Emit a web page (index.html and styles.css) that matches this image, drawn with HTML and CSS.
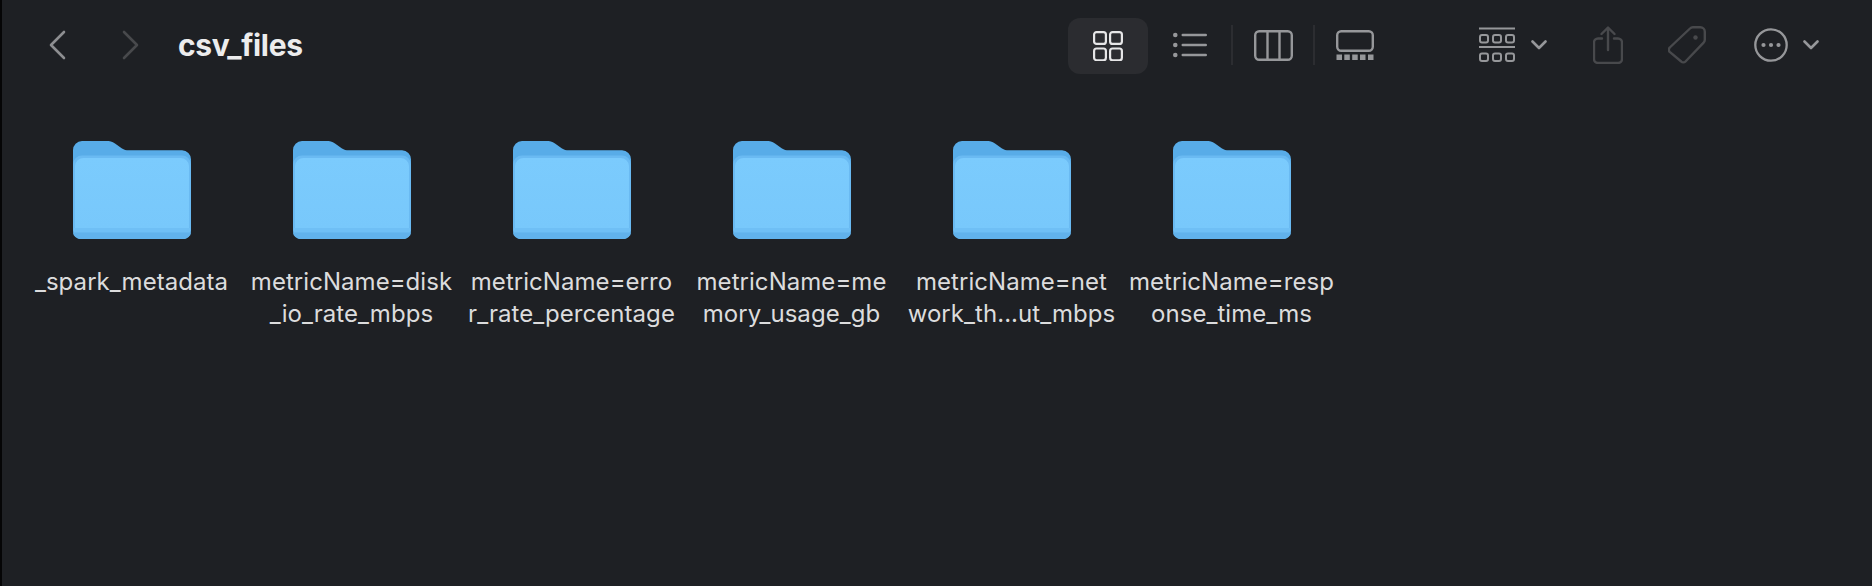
FILE: index.html
```html
<!DOCTYPE html>
<html lang="en">
<head>
<meta charset="UTF-8" />
<title>csv_files</title>
<link rel="stylesheet" href="styles.css">
</head>
<body>

<svg class="defs" width="0" height="0">
    <defs>
        <linearGradient id="front" x1="0" y1="0" x2="0" y2="1">
            <stop offset="0" stop-color="#7bcbfd"/>
            <stop offset="1" stop-color="#78c8fb"/>
        </linearGradient>
        <symbol id="folder" viewBox="0 0 118 98">
            <path d="M0 9a9 9 0 0 1 9-9h24c4 0 6 .6 9 2.600l7 4.800c2 1.300 4 1.900 7 1.900h53a9 9 0 0 1 9 9v71a9 9 0 0 1-9 9H9a9 9 0 0 1-9-9z" fill="#58ace8"/>
            <path d="M0 23a9 9 0 0 1 9-8.500h100a9 9 0 0 1 9 8.500v66a9 9 0 0 1-9 9H9a9 9 0 0 1-9-9z" fill="#6abaf2"/>
            <path d="M2 25a8.500 8.500 0 0 1 8.500-8h97a8.500 8.500 0 0 1 8.500 8v63H2z" fill="url(#front)"/>
            <path d="M1 87h116v5H1z" fill="#6fbff5"/>
            <path d="M0 91.500h118a8 6.500 0 0 1-8 6.500H8a8 6.500 0 0 1-8-6.500z" fill="#61b2ec"/>
        </symbol>
    </defs>
</svg>

<div class="window">
    <!-- toolbar -->
    <div class="toolbar">
        <svg class="nav-back" width="18" height="30" viewBox="0 0 18 30"><path d="M16 2 3 15l13 13" fill="none" stroke="#8d8e91" stroke-width="2.600" stroke-linecap="round" stroke-linejoin="round"/></svg>
        <svg class="nav-next" width="18" height="30" viewBox="0 0 18 30"><path d="m2 2 13 13L2 28" fill="none" stroke="#48494c" stroke-width="2.600" stroke-linecap="round" stroke-linejoin="round"/></svg>
        <div class="title">csv_files</div>

        <div class="view-on">
            <svg width="30" height="30" viewBox="0 0 30 30" fill="none" stroke="#e6e6e7" stroke-width="2.200">
                <rect x="1.100" y="1.100" width="11.800" height="11.800" rx="2.500"/>
                <rect x="17.100" y="1.100" width="11.800" height="11.800" rx="2.500"/>
                <rect x="1.100" y="17.500" width="11.800" height="11.800" rx="2.500"/>
                <rect x="17.100" y="17.500" width="11.800" height="11.800" rx="2.500"/>
            </svg>
        </div>
        <svg class="ic-list" width="34" height="26" viewBox="0 0 34 26" fill="#96979a">
            <circle cx="2.300" cy="3" r="2.300"/><circle cx="2.300" cy="13" r="2.300"/><circle cx="2.300" cy="23" r="2.300"/>
            <rect x="8.500" y="1.800" width="25.500" height="2.400" rx="1.200"/>
            <rect x="8.500" y="11.800" width="25.500" height="2.400" rx="1.200"/>
            <rect x="8.500" y="21.800" width="25.500" height="2.400" rx="1.200"/>
        </svg>
        <div class="sep"></div>
        <svg class="ic-cols" width="39" height="31" viewBox="0 0 39 31" fill="none" stroke="#96979a" stroke-width="2.400">
            <rect x="1.200" y="1.200" width="36.600" height="28.600" rx="4"/>
            <path d="M13.500 1.200v28.600M25.500 1.200v28.600"/>
        </svg>
        <div class="sep sep-2"></div>
        <svg class="ic-gallery" width="38" height="30" viewBox="0 0 38 30" fill="#96979a">
            <rect x="1.200" y="1.200" width="35.600" height="19.600" rx="4" fill="none" stroke="#96979a" stroke-width="2.400"/>
            <rect x="0.500" y="24.500" width="5.500" height="5.500"/><rect x="8.300" y="24.500" width="5.500" height="5.500"/><rect x="16.200" y="24.500" width="5.500" height="5.500"/><rect x="24" y="24.500" width="5.500" height="5.500"/><rect x="32" y="24.500" width="5.500" height="5.500"/>
        </svg>

        <svg class="ic-group" width="36" height="36" viewBox="0 0 36 36" fill="none" stroke="#96979a" stroke-width="2">
            <path d="M0 1.500h36M0 20h36" stroke-width="2.200"/>
            <rect x="1" y="8" width="8" height="7.500" rx="2"/><rect x="14" y="8" width="8" height="7.500" rx="2"/><rect x="27" y="8" width="8" height="7.500" rx="2"/>
            <rect x="1" y="26.500" width="8" height="7.500" rx="2"/><rect x="14" y="26.500" width="8" height="7.500" rx="2"/><rect x="27" y="26.500" width="8" height="7.500" rx="2"/>
        </svg>
        <svg class="chev" width="16" height="10" viewBox="0 0 16 10"><path d="m1.500 1.500 6.500 6.500 6.500-6.500" fill="none" stroke="#96979a" stroke-width="2.600" stroke-linecap="round" stroke-linejoin="round"/></svg>
        <svg class="ic-share" width="30" height="38" viewBox="0 0 30 38" fill="none" stroke="#48494c" stroke-width="2.400" stroke-linecap="round" stroke-linejoin="round">
            <path d="M9 12.500H5a4 4 0 0 0-4 4V33a4 4 0 0 0 4 4h20a4 4 0 0 0 4-4V16.500a4 4 0 0 0-4-4h-4"/>
            <path d="M15 24V2M8.500 8 15 1.500 21.500 8"/>
        </svg>
        <svg class="ic-tag" width="38" height="38" viewBox="0 0 38 38" fill="none" stroke="#48494c" stroke-width="2.400" stroke-linejoin="round">
            <path d="M1.800 21.500 22 2.500a4 4 0 0 1 2.800-1.200h7.500a4.500 4.500 0 0 1 4.500 4.500v8a4 4 0 0 1-1.200 2.800L17.500 35.500a3 3 0 0 1-4.300 0L1.700 25.800a3 3 0 0 1 .100-4.300z"/>
            <circle cx="27.500" cy="11.500" r="2.200" fill="#48494c" stroke="none"/>
        </svg>
        <svg class="ic-more" width="34" height="34" viewBox="0 0 34 34">
            <circle cx="17" cy="17" r="15.700" fill="none" stroke="#96979a" stroke-width="2.300"/>
            <circle cx="9.500" cy="17" r="2.100" fill="#96979a"/><circle cx="17" cy="17" r="2.100" fill="#96979a"/><circle cx="24.500" cy="17" r="2.100" fill="#96979a"/>
        </svg>
        <svg class="chev chev-2" width="16" height="10" viewBox="0 0 16 10"><path d="m1.500 1.500 6.500 6.500 6.500-6.500" fill="none" stroke="#96979a" stroke-width="2.600" stroke-linecap="round" stroke-linejoin="round"/></svg>
    </div>

    <!-- folder icons -->
    <div class="files">
        <div class="item">
            <svg class="folder" width="118" height="98"><use href="#folder"/></svg>
            <div class="name">_spark_metadata</div>
        </div>
        <div class="item">
            <svg class="folder" width="118" height="98"><use href="#folder"/></svg>
            <div class="name">metricName=disk<br>_io_rate_mbps</div>
        </div>
        <div class="item">
            <svg class="folder" width="118" height="98"><use href="#folder"/></svg>
            <div class="name">metricName=erro<br>r_rate_percentage</div>
        </div>
        <div class="item">
            <svg class="folder" width="118" height="98"><use href="#folder"/></svg>
            <div class="name">metricName=me<br>mory_usage_gb</div>
        </div>
        <div class="item">
            <svg class="folder" width="118" height="98"><use href="#folder"/></svg>
            <div class="name">metricName=net<br>work_th...ut_mbps</div>
        </div>
        <div class="item">
            <svg class="folder" width="118" height="98"><use href="#folder"/></svg>
            <div class="name">metricName=resp<br>onse_time_ms</div>
        </div>
    </div>
</div>

</body>
</html>
```

FILE: styles.css
```css
/* --- Layout --------------------------------------------------------- */
html,body{
    height:100%;
}
body{
    margin:0;
    background:#1e2024;
    font-family:Inter,"Liberation Sans",sans-serif;
    overflow:hidden;
}
.defs{
    position:absolute;
}
.window{
    height:100%;
    box-sizing:border-box;
    border-left:2px solid #050506;
}

/* --- Toolbar -------------------------------------------------------- */
.toolbar{
    display:flex;
    align-items:center;
    height:90px;
}
.toolbar svg{
    flex:none;
}
.nav-back{ margin-left:46px; }
.nav-next{ margin-left:56px; }
.title{
    margin-left:38px;
    width:890px;
    font-size:30px;
    font-weight:700;
    color:#ececed;
    letter-spacing:-.3px;
}
.view-on{
    display:flex;
    align-items:center;
    justify-content:center;
    width:80px;
    height:56px;
    margin-top:1px;
    background:#2b2c30;
    border-radius:12px;
}
.ic-list{ margin-left:24.500px; }
.sep{
    width:2px;
    height:40px;
    margin-left:24px;
    background:#2c2d31;
}
.ic-cols{ margin-left:21px; }
.sep-2{ margin-left:20px; }
.ic-gallery{ margin-left:21px; }
.ic-group{ margin-left:105px; }
.chev{ margin-left:16px; }
.chev-2{ margin-left:15px; }
.ic-share{ margin-left:46px; }
.ic-tag{ margin-left:45px; }
.ic-more{ margin-left:48px; }

/* --- Folder grid ---------------------------------------------------- */
.files{
    display:flex;
    padding-top:51px;
    padding-left:19.500px;
}
.item{
    display:flex;
    flex-direction:column;
    align-items:center;
    width:220px;
}
.name{
    margin-top:27px;
    font-size:24px;
    line-height:32px;
    letter-spacing:.05px;
    color:#dcdcdd;
    text-align:center;
    white-space:nowrap;
}
```
